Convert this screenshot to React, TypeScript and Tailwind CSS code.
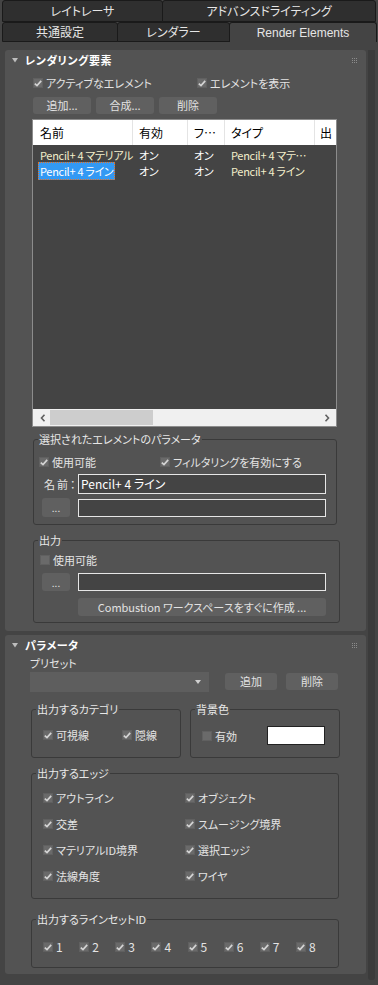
import React from 'react'

const jp = "font-['Noto_Sans_CJK_JP','Noto_Sans',sans-serif] [font-feature-settings:'palt']"

function Check({ checked = true, label, className = '' }: { checked?: boolean; label?: string; className?: string }) {
  return (
    <div className={`flex items-center h-[14px] ${className}`}>
      <span className="w-[10px] h-[10px] shrink-0 bg-[#6a6a6a] border border-[#606060] flex items-center justify-center">
        {checked && (
          <svg width="8" height="7" viewBox="0 0 8 7">
            <path d="M0.8 3.6 L3 5.6 L7.2 0.9" stroke="#d4d4d4" strokeWidth="1.7" fill="none" />
          </svg>
        )}
      </span>
      {label && <span className="ml-[3px] leading-[14px] whitespace-nowrap">{label}</span>}
    </div>
  )
}

function Btn({ children, className = '' }: { children: React.ReactNode; className?: string }) {
  return (
    <div className={`bg-[#606060] rounded-[3px] flex items-center justify-center text-[#e2e2e2] ${className}`}>
      {children}
    </div>
  )
}

function Group({ title, className = '', children }: { title: string; className?: string; children: React.ReactNode }) {
  return (
    <fieldset className={`border border-[#3a3a3a] rounded-[3px] ${className}`}>
      <legend className="ml-[4px] px-[1px] leading-[14px] text-[#e8e8e8]">{title}</legend>
      {children}
    </fieldset>
  )
}

function RolloutHeader({ title }: { title: string }) {
  return (
    <div className="h-[20px] flex items-center relative">
      <svg width="6" height="5" viewBox="0 0 6 5" className="ml-[7px]">
        <path d="M0 0 H6 L3 4.5 Z" fill="#bdbdbd" />
      </svg>
      <span className="ml-[7px] font-bold text-[11px] text-white tracking-[0.5px]">{title}</span>
      <div className="ml-auto mr-[9px] grid grid-cols-3 gap-[1px]">
        {Array.from({ length: 9 }).map((_, i) => (
          <span key={i} className="w-[1px] h-[1px] bg-[#8c8c8c]" />
        ))}
      </div>
    </div>
  )
}

function Tab({ label, active = false, className = '' }: { label: string; active?: boolean; className?: string }) {
  return (
    <div
      className={`h-full flex items-center justify-center text-[12px] text-[#e6e6e6] rounded-t-[3px] border-[#1a1a1a] ${
        active ? 'bg-[#444444] border-l border-t border-r' : 'bg-[#2f2f2f] border'
      } ${className}`}
    >
      {label}
    </div>
  )
}

export default function App() {
  const edges = [
    ['アウトライン', 'オブジェクト'],
    ['交差', 'スムージング境界'],
    ['マテリアルID境界', '選択エッジ'],
    ['法線角度', 'ワイヤ'],
  ]

  return (
    <div className={`w-[378px] h-[985px] bg-[#444444] overflow-hidden text-[11px] text-[#e4e4e4] ${jp}`}>
      {/* tabs */}
      <div className="h-[22px] flex pl-[2px]">
        <Tab label="レイトレーサ" className="w-[161px]" />
        <Tab label="アドバンスドライティング" className="w-[214px] -ml-[1px]" />
      </div>
      <div className="h-[20px] flex pl-[2px]">
        <Tab label="共通設定" className="w-[116px]" />
        <Tab label="レンダラー" className="w-[113px] -ml-[1px]" />
        <Tab label="Render Elements" active className="w-[148px] -ml-[1px] font-['Liberation_Sans',sans-serif]" />
      </div>

      <div className="flex mt-[8px]">
        <div className="ml-[5px] w-[361px]">
          {/* Rollout 1 */}
          <div className="bg-[#535353] rounded-[3px] pb-[8px]">
            <RolloutHeader title="レンダリング要素" />
            <div className="pl-[28px]">
              <div className="flex mt-[6px]">
                <Check label="アクティブなエレメント" className="w-[164px]" />
                <Check label="エレメントを表示" />
              </div>
              <div className="flex gap-[5px] mt-[7px]">
                <Btn className="w-[58px] h-[17px]">追加...</Btn>
                <Btn className="w-[58px] h-[17px]">合成...</Btn>
                <Btn className="w-[58px] h-[17px]">削除</Btn>
              </div>

              {/* list */}
              <div className="mt-[5px] -ml-[1px] w-[305px] h-[308px] border border-[#8c8c8c] bg-[#444444] flex flex-col">
                <div className="h-[25px] bg-white text-black text-[12px] flex items-center overflow-hidden">
                  <div className="w-[100px] h-full pl-[7px] flex items-center border-r border-[#e4e4e4]">名前</div>
                  <div className="w-[55px] h-full pl-[6px] flex items-center border-r border-[#e4e4e4]">有効</div>
                  <div className="w-[37px] h-full pl-[6px] flex items-center border-r border-[#e4e4e4]">フ…</div>
                  <div className="w-[90px] h-full pl-[6px] flex items-center border-r border-[#e4e4e4]">タイプ</div>
                  <div className="w-[21px] h-full pl-[5px] flex items-center overflow-hidden">
                    <span className="whitespace-nowrap">出</span>
                  </div>
                </div>
                <div className="mt-[2px] text-[11px] tracking-[-0.3px]">
                  <div className="h-[16px] flex items-center">
                    <div className="w-[100px] pl-[5px] whitespace-nowrap">
                      <span className="border border-transparent px-[1px] text-[#f3eecb]">Pencil+ 4 マテリアル</span>
                    </div>
                    <div className="w-[55px] pl-[6px] text-white">オン</div>
                    <div className="w-[37px] pl-[6px] text-white">オン</div>
                    <div className="w-[90px] pl-[6px] text-[#f3eecb] whitespace-nowrap">Pencil+ 4 マテ…</div>
                  </div>
                  <div className="h-[16px] flex items-center">
                    <div className="w-[100px] pl-[5px] whitespace-nowrap">
                      <span className="border border-dotted border-[#e8701f] bg-[#3399f3] px-[1px] text-white">
                        Pencil+ 4 ライン
                      </span>
                    </div>
                    <div className="w-[55px] pl-[6px] text-white">オン</div>
                    <div className="w-[37px] pl-[6px] text-white">オン</div>
                    <div className="w-[90px] pl-[6px] text-[#f3eecb] whitespace-nowrap">Pencil+ 4 ライン</div>
                  </div>
                </div>
                <div className="flex-1" />
                <div className="h-[17px] bg-[#f0f0f0] flex items-center">
                  <svg width="6" height="8" viewBox="0 0 6 8" className="ml-[7px]">
                    <path d="M4.5 0.8 L1.5 4 L4.5 7.2" stroke="#606060" strokeWidth="1.6" fill="none" />
                  </svg>
                  <div className="ml-[4px] w-[103px] h-[15px] bg-[#cdcdcd]" />
                  <div className="flex-1" />
                  <svg width="6" height="8" viewBox="0 0 6 8" className="mr-[6px]">
                    <path d="M1.5 0.8 L4.5 4 L1.5 7.2" stroke="#606060" strokeWidth="1.6" fill="none" />
                  </svg>
                </div>
              </div>

              <Group title="選択されたエレメントのパラメータ" className="mt-[5px] w-[304px] h-[93px]">
                <div className="pl-[5px] flex mt-[9px]">
                  <Check label="使用可能" className="w-[121px]" />
                  <Check label="フィルタリングを有効にする" />
                </div>
                <div className="flex items-center mt-[5px]">
                  <span className="ml-[10px] w-[34px] tracking-[2px]">名前：</span>
                  <div className="w-[248px] h-[20px] border border-[#e6e6e6] bg-[#444444] flex items-center pl-[2px] text-[12px] text-white">
                    Pencil+ 4 ライン
                  </div>
                </div>
                <div className="flex items-center mt-[4px]">
                  <Btn className="ml-[8px] w-[28px] h-[19px] text-[10px]">...</Btn>
                  <div className="ml-[8px] w-[248px] h-[18px] border border-[#e6e6e6] bg-[#444444]" />
                </div>
              </Group>

              <Group title="出力" className="mt-[8px] w-[307px] h-[90px]">
                <Check checked={false} label="使用可能" className="pl-[6px] mt-[6px]" />
                <div className="flex items-center mt-[6px]">
                  <Btn className="ml-[8px] w-[28px] h-[18px] text-[10px]">...</Btn>
                  <div className="ml-[8px] w-[248px] h-[18px] border border-[#e6e6e6] bg-[#444444]" />
                </div>
                <Btn className="ml-[44px] mt-[7px] w-[248px] h-[18px] bg-[#5c5c5c]">Combustion ワークスペースをすぐに作成 ...</Btn>
              </Group>
            </div>
          </div>

          {/* Rollout 2 */}
          <div className="mt-[4px] bg-[#535353] rounded-[3px] pb-[6px]">
            <RolloutHeader title="パラメータ" />
            <div className="pl-[25px]">
              <div className="mt-[1px] leading-[14px]">プリセット</div>
              <div className="flex mt-[2px]">
                <div className="w-[179px] h-[20px] bg-[#5e5e5e] flex items-center justify-end pr-[8px]">
                  <svg width="6" height="4" viewBox="0 0 6 4">
                    <path d="M0 0 H6 L3 4 Z" fill="#d0d0d0" />
                  </svg>
                </div>
                <Btn className="ml-[16px] mt-[1px] w-[52px] h-[17px]">追加</Btn>
                <Btn className="ml-[9px] mt-[1px] w-[52px] h-[17px]">削除</Btn>
              </div>

              <div className="flex mt-[10px] ml-[1px]">
                <Group title="出力するカテゴリ" className="w-[150px] h-[56px]">
                  <div className="flex mt-[12px] pl-[11px]">
                    <Check label="可視線" className="w-[79px]" />
                    <Check label="隠線" />
                  </div>
                </Group>
                <Group title="背景色" className="ml-[9px] w-[150px] h-[56px]">
                  <div className="flex items-center mt-[10px] pl-[11px]">
                    <Check checked={false} label="有効" className="w-[65px]" />
                    <div className="w-[58px] h-[19px] bg-white border border-[#222]" />
                  </div>
                </Group>
              </div>

              <Group title="出力するエッジ" className="mt-[8px] ml-[1px] w-[308px] h-[133px]">
                <div className="flex flex-col gap-[12px] mt-[11px] pl-[11px]">
                  {edges.map(([a, b]) => (
                    <div key={a} className="flex">
                      <Check label={a} className="w-[142px]" />
                      <Check label={b} />
                    </div>
                  ))}
                </div>
              </Group>

              <Group title="出力するラインセットID" className="mt-[13px] ml-[1px] w-[308px] h-[56px]">
                <div className="grid grid-cols-8 w-[300px] mt-[14px] pl-[11px]">
                  {[1, 2, 3, 4, 5, 6, 7, 8].map((n) => (
                    <Check key={n} label={String(n)} className="text-[12px]" />
                  ))}
                </div>
              </Group>
            </div>
          </div>
        </div>
        <div className="ml-[2px] w-[7px] h-[930px] bg-[#3b3b3b] rounded-b-[3px]" />
      </div>
    </div>
  )
}
